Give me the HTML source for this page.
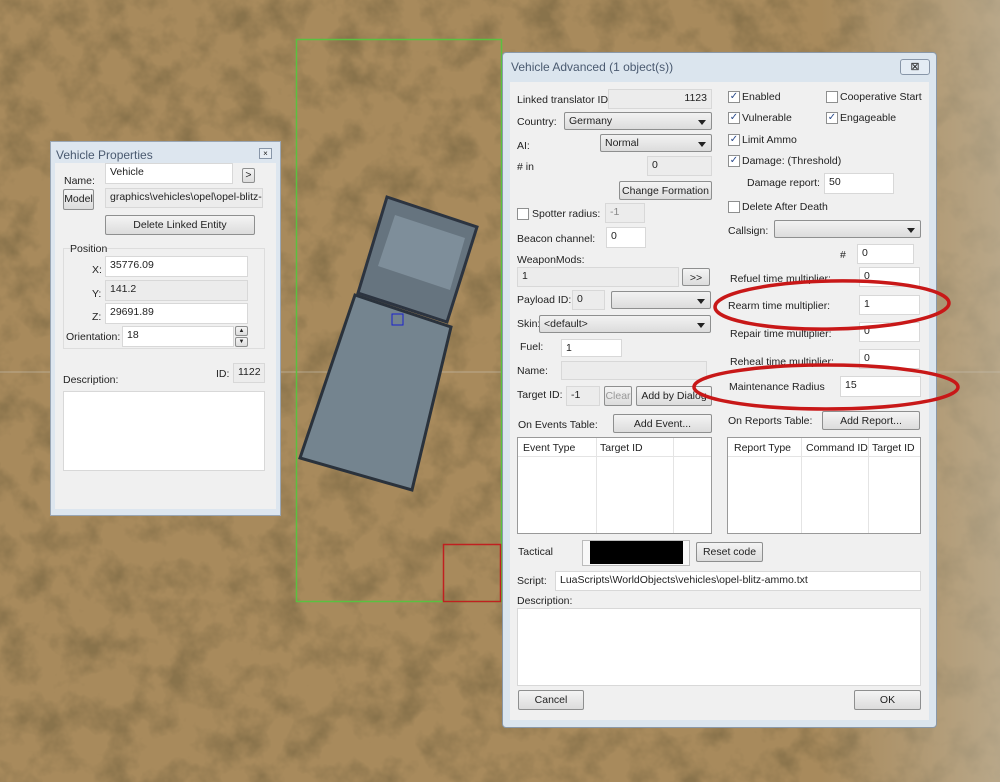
<!DOCTYPE html>
<html><head><meta charset="utf-8"><style>
*{box-sizing:border-box;margin:0;padding:0}
body{width:1000px;height:782px;overflow:hidden;position:relative;font-family:"Liberation Sans",sans-serif;font-size:10.5px;color:#222;
background:#a88a5c}
.a{position:absolute}
.w{position:absolute;background:#f0f0f0}
.in{position:absolute;background:#fff;border:1px solid #d8d8d8;padding:2px 4px;font-size:10.5px;white-space:nowrap;overflow:hidden}
.ro{background:#ececec}
.btn{position:absolute;background:linear-gradient(#f4f4f4,#dcdcdc);border:1px solid #8e8f8f;border-radius:2px;text-align:center;font-size:10.5px;line-height:18px;white-space:nowrap;overflow:hidden}
.sel{position:absolute;background:linear-gradient(#f2f2f2,#dcdcdc);border:1px solid #8e8f8f;border-radius:2px;padding:2px 4px;font-size:10.5px}
.sel:after{content:"";position:absolute;right:5px;top:7px;border:4px solid transparent;border-top:5px solid #222}
.cb{position:absolute;width:12px;height:12px;border:1px solid #8e8f8f;background:#fff;font-size:10px;line-height:10px;text-align:center;color:#2a4a8a}
.t{position:absolute;font-size:10.5px;white-space:nowrap}
.tbl{position:absolute;background:#fff;border:1px solid #999}
</style></head><body>
<svg class="a" style="left:0;top:0" width="1000" height="782">
<defs><filter id="n" x="0" y="0" width="100%" height="100%"><feTurbulence type="fractalNoise" baseFrequency="0.03" numOctaves="4" seed="7"/><feColorMatrix values="0 0 0 0 0.25 0 0 0 0 0.17 0 0 0 0 0.07 2.5 0 0 0 -1.05"/></filter>
<linearGradient id="g" x1="0" x2="1"><stop offset="0" stop-color="#bcae94" stop-opacity="0"/><stop offset="1" stop-color="#c0b49c" stop-opacity="0.7"/></linearGradient></defs>
<rect width="1000" height="782" filter="url(#n)"/>
<rect x="820" width="180" height="782" fill="url(#g)"/>
<line x1="0" y1="372" x2="1000" y2="372" stroke="#c8c0b0" stroke-width="1" opacity="0.6"/>
<rect x="296.5" y="39.5" width="205" height="562" fill="none" stroke="#5bc040" stroke-width="1.5"/>
<rect x="443.5" y="544.5" width="57" height="57" fill="none" stroke="#c02020" stroke-width="1.5"/>
<polygon points="387,197 477,227 447,322 358,293" fill="#66747f" stroke="#2c3440" stroke-width="3"/>
<polygon points="395,215 465,238 450,290 378,266" fill="#7e8e9a"/>
<polygon points="355,295 451,327 412,490 300,458" fill="#74848f" stroke="#2a323c" stroke-width="3"/>
<rect x="392" y="314" width="11" height="11" fill="none" stroke="#1a22cc" stroke-width="1"/>
</svg>

<!-- Left panel -->
<div class="w" style="left:50px;top:141px;width:231px;height:375px;background:#dde6ef;border:1px solid #9aa6b4"></div>
<div class="t" style="left:56px;top:148px;font-size:12px;color:#4a5a70">Vehicle Properties</div>
<div class="a" style="left:259px;top:148px;width:13px;height:11px;border:1px solid #8896a8;background:#e8eef4;font-size:8px;text-align:center;line-height:9px">×</div>
<div class="w" style="left:55px;top:163px;width:221px;height:346px"></div>
<div class="t" style="left:64px;top:175px">Name:</div>
<div class="in" style="left:105px;top:163px;width:128px;height:21px">Vehicle</div>
<div class="btn" style="left:242px;top:168px;width:13px;height:15px;line-height:13px">&gt;</div>
<div class="btn" style="left:63px;top:189px;width:31px;height:21px">Model</div>
<div class="in ro" style="left:105px;top:188px;width:158px;height:20px">graphics\vehicles\opel\opel-blitz-a</div>
<div class="btn" style="left:105px;top:215px;width:150px;height:20px">Delete Linked Entity</div>
<div class="a" style="left:63px;top:248px;width:202px;height:101px;border:1px solid #ddd"></div>
<div class="t" style="left:70px;top:243px;background:#f0f0f0">Position</div>
<div class="t" style="left:92px;top:264px">X:</div><div class="in" style="left:105px;top:256px;width:143px;height:21px">35776.09</div>
<div class="t" style="left:92px;top:288px">Y:</div><div class="in ro" style="left:105px;top:280px;width:143px;height:21px">141.2</div>
<div class="t" style="left:92px;top:311px">Z:</div><div class="in" style="left:105px;top:303px;width:143px;height:21px">29691.89</div>
<div class="t" style="left:66px;top:331px">Orientation:</div><div class="in" style="left:122px;top:326px;width:112px;height:21px">18</div>
<div class="btn" style="left:235px;top:326px;width:13px;height:10px;font-size:6px;line-height:8px">▲</div>
<div class="btn" style="left:235px;top:337px;width:13px;height:10px;font-size:6px;line-height:8px">▼</div>
<div class="t" style="left:63px;top:374px">Description:</div>
<div class="t" style="left:216px;top:368px">ID:</div>
<div class="in ro" style="left:233px;top:363px;width:32px;height:20px">1122</div>
<div class="in" style="left:63px;top:391px;width:202px;height:80px"></div>

<!-- Main dialog -->
<div class="w" style="left:502px;top:52px;width:435px;height:676px;background:#dbe5ee;border:1px solid #8a98a8;border-radius:4px"></div>
<div class="t" style="left:511px;top:60px;font-size:12px;color:#4a5a70">Vehicle Advanced (1 object(s))</div>
<div class="a" style="left:900px;top:59px;width:30px;height:16px;border:1px solid #8896a8;border-radius:3px;background:#e4ecf4;text-align:center;font-size:11px;line-height:14px">⊠</div>
<div class="w" style="left:510px;top:82px;width:419px;height:638px"></div>

<div class="t" style="left:517px;top:94px">Linked translator ID:</div>
<div class="in ro" style="left:608px;top:89px;width:104px;height:20px;text-align:right">1123</div>
<div class="t" style="left:517px;top:116px">Country:</div>
<div class="sel" style="left:564px;top:112px;width:148px;height:18px">Germany</div>
<div class="t" style="left:517px;top:140px">AI:</div>
<div class="sel" style="left:600px;top:134px;width:112px;height:18px">Normal</div>
<div class="t" style="left:517px;top:161px"># in</div>
<div class="in ro" style="left:647px;top:156px;width:65px;height:20px">0</div>
<div class="btn" style="left:619px;top:181px;width:93px;height:19px">Change Formation</div>
<div class="cb" style="left:517px;top:208px"></div><div class="t" style="left:532px;top:208px">Spotter radius:</div>
<div class="in ro" style="left:605px;top:203px;width:40px;height:20px;color:#888">-1</div>
<div class="t" style="left:517px;top:233px">Beacon channel:</div>
<div class="in" style="left:606px;top:227px;width:40px;height:21px">0</div>
<div class="t" style="left:517px;top:254px">WeaponMods:</div>
<div class="in ro" style="left:517px;top:267px;width:162px;height:20px">1</div>
<div class="btn" style="left:682px;top:268px;width:28px;height:18px">&gt;&gt;</div>
<div class="t" style="left:517px;top:294px">Payload ID:</div>
<div class="in ro" style="left:572px;top:290px;width:33px;height:20px">0</div>
<div class="sel" style="left:611px;top:291px;width:100px;height:18px"></div>
<div class="t" style="left:517px;top:318px">Skin:</div>
<div class="sel" style="left:539px;top:315px;width:172px;height:18px">&lt;default&gt;</div>
<div class="t" style="left:520px;top:341px">Fuel:</div>
<div class="in" style="left:561px;top:339px;width:61px;height:18px">1</div>
<div class="t" style="left:517px;top:365px">Name:</div>
<div class="in ro" style="left:561px;top:361px;width:146px;height:19px"></div>
<div class="t" style="left:517px;top:389px">Target ID:</div>
<div class="in ro" style="left:566px;top:386px;width:34px;height:20px">-1</div>
<div class="btn" style="left:604px;top:386px;width:28px;height:20px;color:#999">Clear</div>
<div class="btn" style="left:636px;top:386px;width:76px;height:20px">Add by Dialog</div>
<div class="t" style="left:518px;top:419px">On Events Table:</div>
<div class="btn" style="left:613px;top:414px;width:99px;height:19px">Add Event...</div>
<div class="tbl" style="left:517px;top:437px;width:195px;height:97px">
<div class="a" style="left:0;top:0;width:193px;height:19px;border-bottom:1px solid #e4e4e4"></div>
<div class="t" style="left:5px;top:4px">Event Type</div><div class="t" style="left:82px;top:4px">Target ID</div>
<div class="a" style="left:78px;top:0;width:1px;height:95px;background:#e4e4e4"></div>
<div class="a" style="left:155px;top:0;width:1px;height:95px;background:#e4e4e4"></div>
</div>
<div class="t" style="left:728px;top:415px">On Reports Table:</div>
<div class="btn" style="left:822px;top:411px;width:98px;height:19px">Add Report...</div>
<div class="tbl" style="left:727px;top:437px;width:194px;height:97px">
<div class="a" style="left:0;top:0;width:192px;height:19px;border-bottom:1px solid #e4e4e4"></div>
<div class="t" style="left:6px;top:4px">Report Type</div><div class="t" style="left:78px;top:4px">Command ID</div><div class="t" style="left:144px;top:4px">Target ID</div>
<div class="a" style="left:73px;top:0;width:1px;height:95px;background:#e4e4e4"></div>
<div class="a" style="left:140px;top:0;width:1px;height:95px;background:#e4e4e4"></div>
</div>
<div class="t" style="left:518px;top:546px">Tactical</div>
<div class="a" style="left:582px;top:540px;width:108px;height:26px;border:1px solid #bbb;background:#f8f8f8"></div>
<div class="a" style="left:590px;top:541px;width:93px;height:23px;background:#000"></div>
<div class="btn" style="left:696px;top:542px;width:67px;height:20px">Reset code</div>
<div class="t" style="left:517px;top:575px">Script:</div>
<div class="in" style="left:555px;top:571px;width:366px;height:20px">LuaScripts\WorldObjects\vehicles\opel-blitz-ammo.txt</div>
<div class="t" style="left:517px;top:595px">Description:</div>
<div class="in" style="left:517px;top:608px;width:404px;height:78px"></div>
<div class="btn" style="left:518px;top:690px;width:66px;height:20px">Cancel</div>
<div class="btn" style="left:854px;top:690px;width:67px;height:20px">OK</div>

<div class="cb" style="left:728px;top:91px">✓</div><div class="t" style="left:742px;top:91px">Enabled</div>
<div class="cb" style="left:826px;top:91px"></div><div class="t" style="left:840px;top:91px">Cooperative Start</div>
<div class="cb" style="left:728px;top:112px">✓</div><div class="t" style="left:742px;top:112px">Vulnerable</div>
<div class="cb" style="left:826px;top:112px">✓</div><div class="t" style="left:840px;top:112px">Engageable</div>
<div class="cb" style="left:728px;top:134px">✓</div><div class="t" style="left:742px;top:134px">Limit Ammo</div>
<div class="cb" style="left:728px;top:155px">✓</div><div class="t" style="left:742px;top:155px">Damage: (Threshold)</div>
<div class="t" style="left:747px;top:177px">Damage report:</div>
<div class="in" style="left:824px;top:173px;width:70px;height:21px">50</div>
<div class="cb" style="left:728px;top:201px"></div><div class="t" style="left:742px;top:201px">Delete After Death</div>
<div class="t" style="left:728px;top:225px">Callsign:</div>
<div class="sel" style="left:774px;top:220px;width:147px;height:18px"></div>
<div class="t" style="left:840px;top:249px">#</div>
<div class="in" style="left:857px;top:244px;width:57px;height:20px">0</div>
<div class="t" style="left:730px;top:273px">Refuel time multiplier:</div>
<div class="in" style="left:859px;top:267px;width:61px;height:20px">0</div>
<div class="t" style="left:728px;top:300px">Rearm time multiplier:</div>
<div class="in" style="left:859px;top:295px;width:61px;height:20px">1</div>
<div class="t" style="left:730px;top:328px">Repair time multiplier:</div>
<div class="in" style="left:859px;top:322px;width:61px;height:20px">0</div>
<div class="t" style="left:730px;top:356px">Reheal time multiplier:</div>
<div class="in" style="left:859px;top:349px;width:61px;height:20px">0</div>
<div class="t" style="left:729px;top:381px">Maintenance Radius</div>
<div class="in" style="left:840px;top:376px;width:81px;height:21px">15</div>

<svg class="a" style="left:0;top:0" width="1000" height="782">
<ellipse cx="832" cy="305" rx="117" ry="24" fill="none" stroke="#c81818" stroke-width="3.5" transform="rotate(-1 832 305)"/>
<ellipse cx="826" cy="387" rx="132" ry="22" fill="none" stroke="#c81818" stroke-width="3.5"/>
</svg>
</body></html>
